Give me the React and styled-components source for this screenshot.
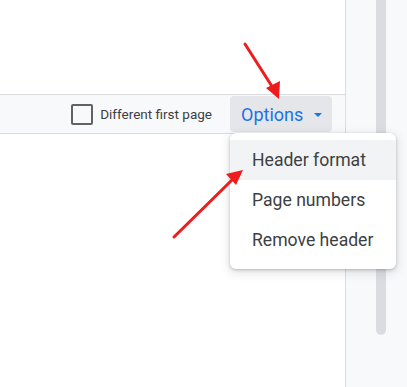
import React from "react";
import styled, { createGlobalStyle } from "styled-components";

const Global = createGlobalStyle`
  html, body { margin: 0; padding: 0; background: #fff; }
  body { font-family: Roboto, "Noto Sans", Arial, sans-serif; }
`;

const Screen = styled.div`
  position: relative;
  display: flex;
  width: 407px;
  height: 387px;
  overflow: hidden;
`;

const Doc = styled.div`
  width: 345px;
  border-right: 1px solid #dadce0;
  background: #fff;
  display: flex;
  flex-direction: column;
`;

const TopSpace = styled.div`
  height: 94px;
`;

const HeaderBar = styled.div`
  height: 38px;
  border-top: 1px solid #dadce0;
  border-bottom: 1px solid #dadce0;
  background: #f8f9fa;
  display: flex;
  align-items: center;
  justify-content: flex-end;
  padding-right: 13px;
  position: relative;
`;

const CheckRow = styled.label`
  display: flex;
  align-items: center;
  gap: 7px;
  margin-right: 18px;
  font-size: 13.5px;
  color: #3c4043;
`;

const Box = styled.span`
  width: 18px;
  height: 17px;
  border: 2px solid #5f6368;
  border-radius: 2px;
`;

const OptionsButton = styled.div`
  height: 36px;
  width: 102px;
  box-sizing: border-box;
  background: #e4e6e9;
  border-radius: 4px;
  display: flex;
  align-items: center;
  padding-left: 11px;
  gap: 11px;
  color: #1a73e8;
  font-size: 18px;
`;

const Caret = styled.span`
  width: 0;
  height: 0;
  border-left: 4.5px solid transparent;
  border-right: 4.5px solid transparent;
  border-top: 4.5px solid #1a73e8;
  margin-top: 2px;
`;

const Menu = styled.div`
  position: absolute;
  top: 38px;
  right: -51px;
  width: 166px;
  padding: 7px 0 9px;
  background: #fff;
  border-radius: 6px;
  box-shadow: 0 1px 3px rgba(60, 64, 67, 0.3), 0 3px 8px 2px rgba(60, 64, 67, 0.12);
  z-index: 2;
`;

const Item = styled.div`
  height: 40px;
  display: flex;
  align-items: center;
  padding-left: 22px;
  font-size: 17.6px;
  color: #3c4043;
  background: ${(p) => (p.$active ? "#f1f3f4" : "transparent")};
`;

const Side = styled.div`
  flex: 1;
  background: #f8f9fa;
  display: flex;
  padding-left: 30px;
`;

const ScrollTrack = styled.div`
  width: 10px;
  height: 335px;
  background: #dadce0;
  border-radius: 0 0 5px 5px;
`;

const Arrows = styled.svg`
  position: absolute;
  left: 0;
  top: 0;
  width: 407px;
  height: 387px;
  pointer-events: none;
  z-index: 5;
`;

export default function App() {
  return (
    <>
      <Global />
      <Screen>
        <Doc>
          <TopSpace />
          <HeaderBar>
            <CheckRow>
              <Box />
              Different first page
            </CheckRow>
            <OptionsButton>
              Options
              <Caret />
            </OptionsButton>
            <Menu>
              <Item $active>Header format</Item>
              <Item>Page numbers</Item>
              <Item>Remove header</Item>
            </Menu>
          </HeaderBar>
        </Doc>
        <Side>
          <ScrollTrack />
        </Side>
        <Arrows viewBox="0 0 407 387">
          <line x1="245" y1="44" x2="273" y2="88" stroke="#ee1c1c" strokeWidth="3" strokeLinecap="round" />
          <polygon points="279,99 266,88 280,81" fill="#ee1c1c" />
          <line x1="174" y1="237" x2="233" y2="179" stroke="#ee1c1c" strokeWidth="3" strokeLinecap="round" />
          <polygon points="243,170 236,185 226,174" fill="#ee1c1c" />
        </Arrows>
      </Screen>
    </>
  );
}
